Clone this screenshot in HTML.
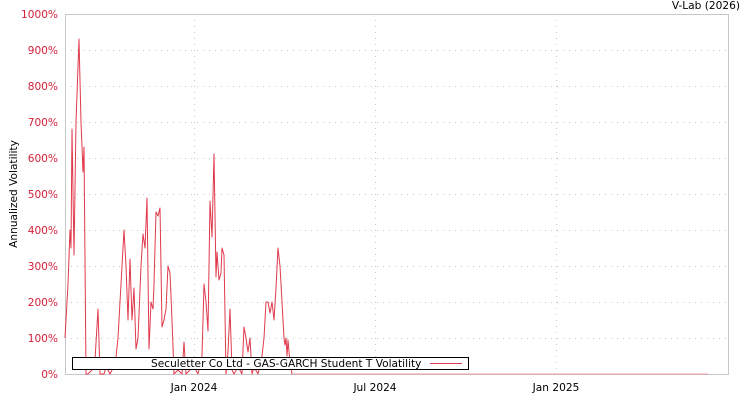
<!DOCTYPE html>
<html><head><meta charset="utf-8"><style>
html,body{margin:0;padding:0;background:#fff;width:750px;height:400px;overflow:hidden}
svg{display:block;font-family:"DejaVu Sans","Liberation Sans",sans-serif}
</style></head><body>
<svg width="750" height="400" viewBox="0 0 750 400" xmlns="http://www.w3.org/2000/svg">
<g stroke="#c8c8c8" stroke-width="1" stroke-dasharray="1,5">
<line x1="65" y1="50.5" x2="728" y2="50.5"/><line x1="65" y1="86.5" x2="728" y2="86.5"/>
<line x1="65" y1="122.5" x2="728" y2="122.5"/><line x1="65" y1="158.5" x2="728" y2="158.5"/>
<line x1="65" y1="194.5" x2="728" y2="194.5"/><line x1="65" y1="230.5" x2="728" y2="230.5"/>
<line x1="65" y1="266.5" x2="728" y2="266.5"/><line x1="65" y1="302.5" x2="728" y2="302.5"/>
<line x1="65" y1="338.5" x2="728" y2="338.5"/>
<line x1="194.5" y1="14" x2="194.5" y2="374"/><line x1="375.5" y1="14" x2="375.5" y2="374"/><line x1="556.5" y1="14" x2="556.5" y2="374"/>
</g>
<path d="M65.5 374.5V14.5H728.5V374.5H65.5" fill="none" stroke="#c8c8c8"/>
<g fill="#d4213a" font-size="10.6" text-anchor="end">
<text x="58" y="18">1000%</text><text x="58" y="54">900%</text><text x="58" y="90">800%</text>
<text x="58" y="126">700%</text><text x="58" y="162">600%</text><text x="58" y="198">500%</text>
<text x="58" y="234">400%</text><text x="58" y="270">300%</text><text x="58" y="306">200%</text>
<text x="58" y="342">100%</text><text x="58" y="378">0%</text>
</g>
<text transform="translate(17,194) rotate(-90)" font-size="10.6" text-anchor="middle" fill="#000">Annualized Volatility</text>
<g font-size="10.6" fill="#000" text-anchor="middle">
<text x="194" y="391">Jan 2024</text><text x="375" y="391">Jul 2024</text><text x="556" y="391">Jan 2025</text>
</g>
<text x="740" y="9" font-size="10.6" text-anchor="end" fill="#000">V-Lab (2026)</text>
<polyline fill="none" stroke="#e03a4c" stroke-width="1" stroke-linejoin="round" points="65,338 68,284 70,230 71,248 72,129 74,255 76,122 79,39 81,122 83,172 84,147 86,374 88,374 92,370 95,360 98,309 100,374 104,374 106,367 108,370 110,374 112,370 115,367 118,338 121,284 124,230 126,266 128,320 130,259 132,320 134,288 136,349 138,338 141,266 143,234 145,248 147,198 149,349 151,302 153,309 154,284 156,212 158,216 160,208 162,327 164,320 166,309 168,266 170,273 172,320 174,374 178,370 182,374 184,342 186,374 190,370 194,367 198,374 202,356 204,284 206,302 208,331 210,201 212,237 214,154 216,277 217,252 219,280 221,273 222,248 224,255 226,374 228,352 230,309 232,370 234,374 238,367 242,374 244,327 246,338 248,352 250,338 252,374 254,367 258,374 262,356 264,338 266,302 268,302 270,313 272,302 274,320 276,288 278,248 280,266 282,302 284,338 285,345 286,338 287,356 288,340 290,363 292,374 708,374"/>
<line x1="292" y1="374" x2="708" y2="374" stroke="#e89aa3" stroke-width="1"/>
<rect x="72.5" y="357.5" width="396" height="12" fill="#fff" stroke="#000"/>
<text x="151" y="367" font-size="10.6" fill="#000">Seculetter Co Ltd - GAS-GARCH Student T Volatility</text>
<line x1="430" y1="363.5" x2="462" y2="363.5" stroke="#e03a4c"/>
</svg>
</body></html>
